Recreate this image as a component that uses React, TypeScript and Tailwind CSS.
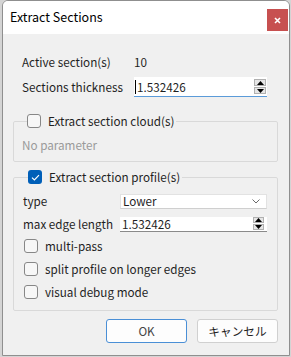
import React from "react";

function Box({ checked }: { checked?: boolean }) {
  if (checked) {
    return (
      <div className="w-[14px] h-[14px] rounded-[3px] bg-[#005fb8] flex items-center justify-center shrink-0">
        <svg width="9" height="7" viewBox="0 0 9 7">
          <path d="M1 3.6 L3.4 6 L8 1.2" stroke="#fff" strokeWidth="1.2" fill="none" />
        </svg>
      </div>
    );
  }
  return <div className="w-[14px] h-[14px] rounded-[3px] border border-[#878787] bg-[#f7f7f7] shrink-0" />;
}

function Spin({ h }: { h: number }) {
  const cls = h === 7 ? "w-[12px] h-[7px]" : "w-[11px] h-[6px]";
  return (
    <div className="flex flex-col gap-[1px]">
      <div className={`${cls} border border-[#b0b0b0] bg-[#e6e6e6] flex items-center justify-center`}>
        <svg width="7" height="4" viewBox="0 0 7 4">
          <path d="M0 4 L3.5 0 L7 4Z" fill="#000" />
        </svg>
      </div>
      <div className={`${cls} border border-[#b0b0b0] bg-[#e6e6e6] flex items-center justify-center`}>
        <svg width="7" height="4" viewBox="0 0 7 4">
          <path d="M0 0 L3.5 4 L7 0Z" fill="#000" />
        </svg>
      </div>
    </div>
  );
}

function CheckRow({ label }: { label: string }) {
  return (
    <div className="flex items-center h-[14px] gap-[7px] pl-[1px]">
      <Box />
      <span className="leading-[16px]">{label}</span>
    </div>
  );
}

export default function App() {
  return (
    <div className="w-[291px] h-[357px] bg-[#d4d4d4] font-['Noto_Sans_CJK_JP',sans-serif] text-[11.7px] text-[#1f1f1f] overflow-hidden">
      <div className="ml-[2px] w-[288px] h-[356px] border border-[#8f8f8f] rounded-t-[6px] bg-[#f0f0f0] flex flex-col overflow-hidden">
        <div className="h-[33px] bg-white flex items-start justify-between shrink-0">
          <span className="pl-[7px] pt-[7px] text-[12.5px] leading-[18px] text-black">Extract Sections</span>
          <div className="mt-[8px] mr-[1px] w-[21px] h-[22px] bg-[#c75050] flex items-center justify-center">
            <svg width="7" height="7" viewBox="0 0 7 7">
              <path d="M1 1 L6 6 M6 1 L1 6" stroke="#fff" strokeWidth="1.6" />
            </svg>
          </div>
        </div>
        <div className="flex-1 flex flex-col pt-[20px]">
          <div className="flex items-center h-[16px] pl-[19px]">
            <span className="w-[112px] leading-[16px]">Active section(s)</span>
            <span className="leading-[16px]">10</span>
          </div>
          <div className="flex items-center h-[20px] mt-[7px] pl-[19px]">
            <span className="w-[112px] leading-[16px]">Sections thickness</span>
            <div className="w-[133px] h-[20px] bg-white border-b border-[#5b9bd9] flex items-center pl-[1px] pr-[1px]">
              <div className="w-[1px] h-[14px] bg-black" />
              <span className="ml-[1px] leading-[16px] flex-1">1.532426</span>
              <Spin h={7} />
            </div>
          </div>

          <fieldset className="ml-[10px] w-[265px] mt-[16px] border border-[#d9d9d9] rounded-[2px] pl-[8px] pb-[8px]">
            <legend className="ml-[5px] flex items-center h-[16px] gap-[7px] pr-[2px]">
              <Box />
              <span className="leading-[16px]">Extract section cloud(s)</span>
            </legend>
            <div className="mt-[8px] h-[16px] leading-[16px] text-[#9a9a9a]">No parameter</div>
          </fieldset>

          <fieldset className="ml-[10px] w-[265px] mt-[7px] border border-[#d9d9d9] rounded-[2px] pl-[9px] pb-[11px]">
            <legend className="ml-[5px] flex items-center h-[16px] gap-[7px] pr-[2px]">
              <Box checked />
              <span className="leading-[16px]">Extract section profile(s)</span>
            </legend>
            <div className="mt-[8px] flex items-center h-[16px]">
              <span className="w-[97px] leading-[16px]">type</span>
              <div className="w-[147px] h-[15px] bg-white border border-[#e2e2e2] border-b-[#cfcfcf] flex items-center pl-[2px] pr-[6px]">
                <span className="flex-1 leading-[14px]">Lower</span>
                <svg width="8" height="5" viewBox="0 0 8 5">
                  <path d="M0.5 0.5 L4 4 L7.5 0.5" stroke="#6b6b6b" strokeWidth="1" fill="none" />
                </svg>
              </div>
            </div>
            <div className="mt-[7px] flex items-center h-[16px]">
              <span className="w-[97px] leading-[16px]">max edge length</span>
              <div className="w-[147px] h-[15px] bg-white border-b border-[#8a8a8a] flex items-center pl-[2px] pr-[3px]">
                <span className="flex-1 leading-[14px]">1.532426</span>
                <Spin h={6} />
              </div>
            </div>
            <div className="mt-[7px] flex flex-col gap-[9px]">
              <CheckRow label="multi-pass" />
              <CheckRow label="split profile on longer edges" />
              <CheckRow label="visual debug mode" />
            </div>
          </fieldset>

          <div className="mt-[8px] flex justify-end gap-[10px] pr-[11px]">
            <div className="w-[81px] h-[24px] rounded-[3px] bg-[#fdfdfd] border border-[#4a8fd6] flex items-center justify-center text-[#444]">
              OK
            </div>
            <div className="w-[81px] h-[24px] rounded-[3px] bg-[#fdfdfd] border border-[#d0d0d0] flex items-center justify-center text-[#1f1f1f]">
              キャンセル
            </div>
          </div>
        </div>
      </div>
    </div>
  );
}
